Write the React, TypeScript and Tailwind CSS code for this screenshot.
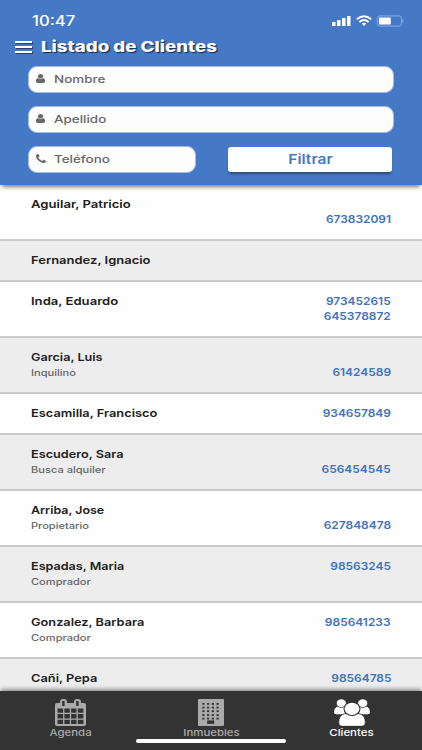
import type { ReactNode } from "react";

type Cliente = {
    nombre: string;
    tipo?: string;
    telefonos: string[];
    altura: string;
    escala: string;
};

const clientes: Cliente[] = [
    { nombre: "Aguilar, Patricio", telefonos: ["", "673832091"], altura: "h-[56px]", escala: "scale-x-[1.19]" },
    { nombre: "Fernandez, Ignacio", telefonos: [], altura: "h-[41px]", escala: "scale-x-[1.18]" },
    { nombre: "Inda, Eduardo", telefonos: ["973452615", "645378872"], altura: "h-[56px]", escala: "scale-x-[1.19]" },
    { nombre: "Garcia, Luis", tipo: "Inquilino", telefonos: ["", "61424589"], altura: "h-[56px]", escala: "scale-x-[1.15]" },
    { nombre: "Escamilla, Francisco", telefonos: ["934657849"], altura: "h-[41px]", escala: "scale-x-[1.165]" },
    { nombre: "Escudero, Sara", tipo: "Busca alquiler", telefonos: ["", "656454545"], altura: "h-[56px]", escala: "scale-x-[1.155]" },
    { nombre: "Arriba, Jose", tipo: "Propietario", telefonos: ["", "627848478"], altura: "h-[56px]", escala: "scale-x-[1.13]" },
    { nombre: "Espadas, Maria", tipo: "Comprador", telefonos: ["98563245"], altura: "h-[56px]", escala: "scale-x-[1.145]" },
    { nombre: "Gonzalez, Barbara", tipo: "Comprador", telefonos: ["985641233"], altura: "h-[56px]", escala: "scale-x-[1.16]" },
    { nombre: "Cañi, Pepa", telefonos: ["98564785"], altura: "h-[56px]", escala: "scale-x-[1.165]" },
];

function IconoUsuario() {
    return (
        <svg className="w-[9px] h-[9px]" viewBox="256 128 1280 1536" preserveAspectRatio="none" fill="#696969">
            <path d="M1536 1399q0 109-62.5 187t-150.5 78h-854q-88 0-150.5-78t-62.5-187q0-85 8.5-160.5t31.5-152 58.5-131 94-89 134.5-34.5q131 128 313 128t313-128q76 0 134.5 34.5t94 89 58.5 131 31.5 152 8.5 160.5zm-256-887q0 159-112.5 271.5t-271.5 112.5-271.5-112.5-112.5-271.5 112.5-271.5 271.5-112.5 271.5 112.5 112.5 271.5z" />
        </svg>
    );
}

function IconoTelefono() {
    return (
        <svg className="w-[10px] h-[9px]" viewBox="192 128 1408 1408" preserveAspectRatio="none" fill="#696969">
            <path d="M1600 1240q0 27-10 70.5t-21 68.5q-21 50-122 106-94 51-186 51-27 0-52.5-3.5t-57.5-12.5-47.5-14.5-55.5-20.5-49-18q-98-35-175-83-128-79-264.5-215.5t-215.5-264.5q-48-77-83-175-3-9-18-49t-20.5-55.5-14.5-47.5-12.5-57.5-3.5-52.5q0-92 51-186 56-101 106-122 25-11 68.5-21t70.5-10q14 0 21 3 18 6 53 76 11 19 30 54t35 63.5 31 53.5q3 4 17.5 25t21.5 35.5 7 28.5q0 20-28.5 50t-62 55-62 53-28.5 46q0 9 5 22.5t8.5 20.5 14 24 11.5 19q76 137 174 235t235 174q2 1 19 11.5t24 14 20.5 8.5 22.5 5q18 0 46-28.5t53-62 55-62 50-28.5q14 0 28.5 7t35.5 21.5 25 17.5q25 15 53.5 31t63.5 35 54 30q70 35 76 53 3 7 3 21z" />
        </svg>
    );
}

function IconoAgenda() {
    return (
        <svg className="w-[31px] h-[27px]" viewBox="0 0 31 27">
            <rect x="0" y="4" width="31" height="23" rx="2" fill="#aaaaaa" />
            <rect x="5" y="0" width="7" height="9" rx="3" fill="#aaaaaa" />
            <rect x="19" y="0" width="7" height="9" rx="3" fill="#aaaaaa" />
            <path d="M7.2 2h2.4v5H7.2zM21.2 2h2.4v5h-2.4z" fill="#333333" />
            <path d="M2.5 9.5h5.6v4.2H2.5zM9.4 9.5h5.4v4.2H9.4zM16.1 9.5h5.4v4.2h-5.4zM22.8 9.5h5.6v4.2h-5.6zM2.5 15h5.6v4.5H2.5zM9.4 15h5.4v4.5H9.4zM16.1 15h5.4v4.5h-5.4zM22.8 15h5.6v4.5h-5.6zM2.5 20.8h5.6V25H2.5zM9.4 20.8h5.4V25H9.4zM16.1 20.8h5.4V25h-5.4zM22.8 20.8h5.6V25h-5.6z" fill="#333333" />
        </svg>
    );
}

function IconoInmuebles() {
    const columnas = [4.3, 9, 13.8, 18.5];
    const filas = [4, 7.7, 11.3, 15.2, 18.7];
    return (
        <svg className="w-[26px] h-[27px]" viewBox="0 0 26 27">
            <rect width="26" height="27" rx="1" fill="#aaaaaa" />
            {filas.map((y) => columnas.map((x) => <rect key={`${x}-${y}`} x={x} y={y} width="2.2" height="1.8" fill="#333333" />))}
            <rect x="9.2" y="21.4" width="7" height="3.5" fill="#333333" />
        </svg>
    );
}

function IconoClientes() {
    return (
        <svg className="w-[36px] h-[27px]" viewBox="0 0 36 27" fill="#ffffff">
            <path d="M3.500 7.500Q0 9 0 13.200 0 15.300 2.500 15.300H12V7.500zM32.500 7.500Q36 9 36 13.200 36 15.300 33.500 15.300H24V7.500z" />
            <g stroke="#333333" strokeWidth=".8">
                <ellipse cx="7.300" cy="4.200" rx="5" ry="4.300" />
                <ellipse cx="28.700" cy="4.200" rx="5" ry="4.300" />
                <path d="M11 14.500Q4.700 16 4.700 23.500 4.700 27.300 9 27.300h18q4.300 0 4.300-3.800 0-7.500-6.300-9z" />
                <ellipse cx="18" cy="9.800" rx="8" ry="6.700" strokeWidth="1.100" />
            </g>
        </svg>
    );
}

function BarraEstado() {
    return (
        <div className="flex justify-between pl-8 pr-[18px] pt-[13px] h-[37px] text-white">
            <span className="text-[14px] leading-4 font-medium origin-left scale-x-[1.19]">10:47</span>
            <svg className="w-[72px] h-[12px] mt-0.5" viewBox="0 0 72 12" fill="#ffffff">
                <rect x="0" y="7" width="3.500" height="4" rx=".6" />
                <rect x="5" y="5" width="3.500" height="6" rx=".6" />
                <rect x="10" y="3" width="3.500" height="8" rx=".6" />
                <rect x="15" y="1" width="3.500" height="10" rx=".6" />
                <g fill="none" stroke="#ffffff" strokeWidth="1.900">
                    <path d="M24.800 4.200Q32 -1.600 39.200 4.200" />
                    <path d="M27.400 6.900Q32 3.200 36.600 6.900" />
                </g>
                <path d="M29.800 8.500Q32 6.800 34.200 8.500L32 10.900z" />
                <rect x="45.400" y=".9" width="24.200" height="10.200" rx="2.500" fill="none" stroke="#a0bbe4" strokeWidth=".8" />
                <rect x="47" y="2.400" width="11.800" height="7.200" rx="1" />
                <path d="M70.500 4.200q2 1.800 0 3.600z" fill="#a0bbe4" />
            </svg>
        </div>
    );
}

function Campo(props: { icono: ReactNode; texto: string }) {
    return (
        <div className="flex items-center w-full h-[27px] rounded-[9px] border border-[#a6bce0] bg-[#fdfdfd] pl-[7px] pb-[2px]">
            <span className="w-[18px] flex">{props.icono}</span>
            <span className="text-[11px] leading-4 font-medium text-[#666666] origin-left scale-x-[1.22]">{props.texto}</span>
        </div>
    );
}

function FilaCliente(props: { cliente: Cliente }) {
    const { nombre, tipo, telefonos, altura, escala } = props.cliente;
    return (
        <div className={`flex shrink-0 justify-between border-b-2 border-[#cbcbcb] px-[31px] pt-3 odd:bg-[#fefefe] even:bg-[#ededed] ${altura}`}>
            <div className="flex flex-col items-start">
                <span className={`text-[11px] leading-[15px] font-semibold text-[#202020] origin-left ${escala}`}>{nombre}</span>
                {tipo && <span className="text-[9px] leading-4 font-medium text-[#656565] origin-left scale-x-[1.23]">{tipo}</span>}
            </div>
            <div className="flex flex-col items-end">
                {telefonos.map((telefono, i) => (
                    <span key={i} className="h-[15px] text-[11px] leading-[15px] font-semibold text-[#4274bd] origin-right scale-x-[1.085]">{telefono}</span>
                ))}
            </div>
        </div>
    );
}

function Pestana(props: { icono: ReactNode; texto: string; activa?: boolean }) {
    return (
        <div className={`flex flex-1 flex-col items-center ${props.activa ? "text-white" : "text-[#aaaaaa]"}`}>
            {props.icono}
            <span className="text-[9.5px] leading-[13px] font-medium scale-x-[1.2]">{props.texto}</span>
        </div>
    );
}

export default function App() {
    return (
        <div className="flex flex-col w-[422px] h-[750px] overflow-hidden bg-white font-[Inter,sans-serif]">
            <header className="relative z-10 h-[185px] shrink-0 bg-[#4679c5] shadow-[0_4px_4px_-2px_rgba(0,0,0,0.5)]">
                <BarraEstado />
                <div className="flex items-center h-[19px] pl-[15px]">
                    <div className="flex flex-col gap-[3px] w-[17px] mr-[9px]">
                        <span className="h-0.5 bg-white shadow-[1px_1px_1px_#223b63]"></span>
                        <span className="h-0.5 bg-white shadow-[1px_1px_1px_#223b63]"></span>
                        <span className="h-0.5 bg-white shadow-[1px_1px_1px_#223b63]"></span>
                    </div>
                    <h1 className="text-[15px] leading-[19px] font-extrabold text-white origin-left scale-x-[1.245] [text-shadow:1px_1px_1px_#172b4b]">Listado de Clientes</h1>
                </div>
                <div className="flex flex-col gap-[13px] px-7 pt-[10px]">
                    <Campo icono={<IconoUsuario />} texto="Nombre" />
                    <Campo icono={<IconoUsuario />} texto="Apellido" />
                    <div className="flex justify-between">
                        <div className="w-[168px]">
                            <Campo icono={<IconoTelefono />} texto="Teléfono" />
                        </div>
                        <button className="w-[164px] h-[25px] mt-px mr-0.5 rounded-[3px] bg-white shadow-[0_3px_3px_-1px_rgba(0,0,0,0.4)] text-[13px] leading-[25px] font-semibold text-[#4679c5]">
                            <span className="inline-block scale-x-[1.2]">Filtrar</span>
                        </button>
                    </div>
                </div>
            </header>
            <main className="flex flex-col flex-1 min-h-0 overflow-hidden">
                {clientes.map((cliente) => (
                    <FilaCliente key={cliente.nombre} cliente={cliente} />
                ))}
            </main>
            <nav className="relative z-10 flex h-[59px] shrink-0 bg-[#333333] pt-2 shadow-[0_-3px_4px_-1px_rgba(0,0,0,0.4)]">
                <Pestana icono={<IconoAgenda />} texto="Agenda" />
                <Pestana icono={<IconoInmuebles />} texto="Inmuebles" />
                <Pestana icono={<IconoClientes />} texto="Clientes" activa />
                <div className="absolute left-[136px] bottom-[7px] w-[150px] h-1 rounded-full bg-white"></div>
            </nav>
        </div>
    );
}
